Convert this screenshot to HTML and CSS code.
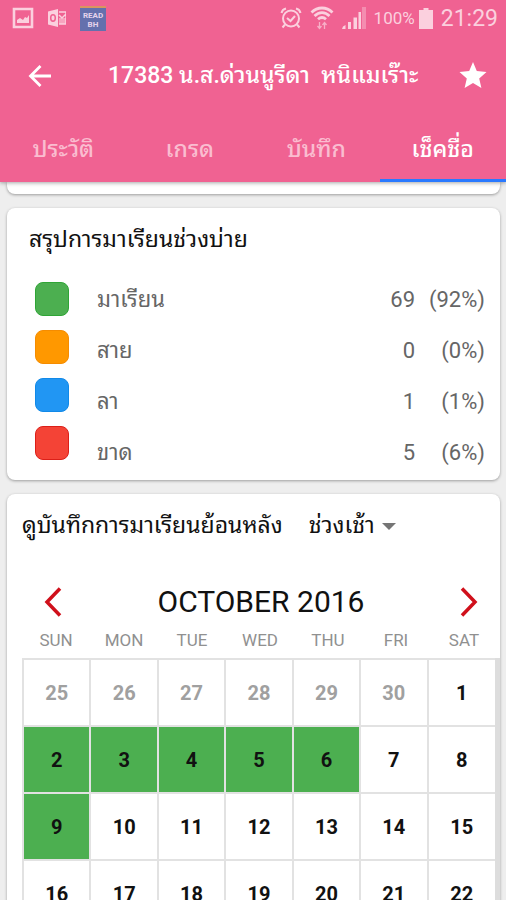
FILE: index.html
```html
<!DOCTYPE html>
<html lang="th">
<head>
<meta charset="utf-8">
<meta name="viewport" content="width=device-width, initial-scale=1">
<title>เช็คชื่อ</title>
<link rel="stylesheet" href="styles.css">
</head>
<body>
<div class="app">
  <header class="header">
    <div class="status">
      <div class="status-group">
        <svg class="icon-image" viewBox="0 0 22 22" width="22" height="22"><path d="M2 2h18v18H2z" fill="none" stroke="currentColor" stroke-width="2.6"/><path d="M5 16v-3l3-2 3 2 2-3 2 1 2-3v8z" fill="currentColor"/></svg>
        <svg class="icon-mail" viewBox="0 0 18 18" width="18" height="18"><path d="M0 2.500 10 0v18L0 15.500z" fill="currentColor"/><path d="M11 3h7v12h-7M11 6l3 3 4-4" fill="none" stroke="currentColor" stroke-width="1.500"/><path d="M11 9h7v6h-7z" fill="currentColor" opacity=".6"/><ellipse cx="5" cy="9" rx="2.300" ry="3.200" fill="none" stroke="#f06292" stroke-width="1.500"/></svg>
        <span class="read-badge">READ<br>BH</span>
      </div>
      <div class="status-group status-right">
        <svg viewBox="0 0 22 22" width="22" height="22" fill="none" stroke="currentColor" stroke-width="2"><circle cx="11" cy="11.500" r="8"/><path d="m7 11 3.500 3 4.500-5M1.500 6C2 3.500 4 2 6 1.500M16 1.500c2 .5 4 2 4.500 4.500M5 17.500 2.500 20.500M17 17.500l2.500 3"/></svg>
        <svg class="icon-wifi" viewBox="0 0 24 24" width="24" height="24" fill="none" stroke="currentColor" stroke-width="2.800"><path d="M1.500 6.500c6-6 15-6 21 0M4.500 10c4.500-4.500 10.500-4.500 15 0M8 13.200c2.500-2.200 5.500-2.200 8 0"/><path d="M9.500 22v-6M7.500 20l2 2.500 2-2.500M14.500 23v-6M12.500 19l2-2.500 2 2.500" stroke-width="1.300" opacity=".7"/></svg>
        <svg class="icon-signal" viewBox="0 0 24 22" width="24" height="22" fill="currentColor"><path d="M1 19.500 3.500 18v4H0zM6 15h3v7H6zM11.500 10.500H15V22h-3.500zM16.500 5H19v17h-2.500z"/><path d="M20 0h4v22h-4z" opacity=".4"/></svg>
        <span class="percent">100%</span>
        <svg class="icon-battery" viewBox="0 0 14 21" width="14" height="21" fill="currentColor"><path d="M4.500 0h5v2H14v19H0V2h4.500z"/></svg>
        <time class="clock">21:29</time>
      </div>
    </div>
    <div class="toolbar">
      <button class="icon-button" aria-label="กลับ"><svg viewBox="0 0 24 24" width="24" height="24" fill="none" stroke="currentColor" stroke-width="2.800"><path d="M23 12H3M12.500 2 2.500 12l10 10"/></svg></button>
      <h1 class="title">17383 น.ส.ด่วนนูรีดา&nbsp; หนิแมเร๊าะ</h1>
      <button class="icon-button" aria-label="รายการโปรด"><svg viewBox="0 0 28 28" width="28" height="28" fill="currentColor"><path d="m14 0 3.800 9 9.700 1-7.300 6.500 2.200 9.500L14 21l-8.400 5 2.200-9.500L.5 10l9.700-1z"/></svg></button>
    </div>
    <nav class="tabs">
      <a class="tab" href="#history">ประวัติ</a>
      <a class="tab" href="#grades">เกรด</a>
      <a class="tab" href="#notes">บันทึก</a>
      <a class="tab tab-active" href="#attendance" aria-current="page">เช็คชื่อ</a>
    </nav>
  </header>

  <main class="content">
    <div class="card card-previous"></div>

    <section class="card summary">
      <h2 class="summary-title">สรุปการมาเรียนช่วงบ่าย</h2>
      <div class="summary-body">
        <div class="swatches">
          <span class="swatch present"></span>
          <span class="swatch late"></span>
          <span class="swatch leave"></span>
          <span class="swatch absent"></span>
        </div>
        <table class="counts">
          <tbody>
            <tr><th scope="row">มาเรียน</th><td>69</td><td class="share">(92%)</td></tr>
            <tr><th scope="row">สาย</th><td>0</td><td class="share">(0%)</td></tr>
            <tr><th scope="row">ลา</th><td>1</td><td class="share">(1%)</td></tr>
            <tr><th scope="row">ขาด</th><td>5</td><td class="share">(6%)</td></tr>
          </tbody>
        </table>
      </div>
    </section>

    <section class="card history">
      <div class="period">
        <label for="period">ดูบันทึกการมาเรียนย้อนหลัง</label>
        <span class="select-wrap">
          <select id="period"><option>ช่วงเช้า</option></select>
        </span>
      </div>
      <div class="month">
        <button class="month-button" aria-label="เดือนก่อน"><svg viewBox="0 0 18 30" width="18" height="30" fill="none" stroke="currentColor" stroke-width="3.500"><path d="M16 1.500 3 15l13 13.500"/></svg></button>
        <h2 class="month-title">OCTOBER 2016</h2>
        <button class="month-button" aria-label="เดือนถัดไป"><svg viewBox="0 0 18 30" width="18" height="30" fill="none" stroke="currentColor" stroke-width="3.500"><path d="m2 1.500 13 13.500L2 28.500"/></svg></button>
      </div>
      <div class="weekdays">
        <span>SUN</span><span>MON</span><span>TUE</span><span>WED</span><span>THU</span><span>FRI</span><span>SAT</span>
      </div>
      <div class="calendar-frame">
        <table class="calendar">
          <tbody>
            <tr><td class="other">25</td><td class="other">26</td><td class="other">27</td><td class="other">28</td><td class="other">29</td><td class="other">30</td><td>1</td></tr>
            <tr><td class="present">2</td><td class="present">3</td><td class="present">4</td><td class="present">5</td><td class="present">6</td><td>7</td><td>8</td></tr>
            <tr><td class="present">9</td><td>10</td><td>11</td><td>12</td><td>13</td><td>14</td><td>15</td></tr>
            <tr><td>16</td><td>17</td><td>18</td><td>19</td><td>20</td><td>21</td><td>22</td></tr>
          </tbody>
        </table>
      </div>
    </section>
  </main>
</div>
</body>
</html>
```
FILE: styles.css
```css
* { box-sizing: border-box; }

body {
  margin: 0;
  background: #eee;
  color: #111;
  font-family: Roboto, "Noto Sans Thai Looped", "Noto Looped Thai", Waree, Loma, Garuda, Umpush, "Droid Sans Thai", "Noto Sans Thai", "Noto Sans", sans-serif;
}

h1, h2 { margin: 0; font-weight: 400; }

button {
  padding: 0;
  border: 0;
  background: none;
  color: inherit;
  display: flex;
}

svg { display: block; flex: none; }

.app {
  height: 100vh;
  overflow: hidden;
}

/* Header */
.header {
  position: relative;
  background: #f06292;
  color: #fff;
  box-shadow: 0 1px 4px rgba(0, 0, 0, .35);
}

.status {
  display: flex;
  justify-content: space-between;
  align-items: center;
  height: 36px;
  padding: 0 8px 0 12px;
  color: #fbd0de;
}

.status-group {
  display: flex;
  align-items: center;
  gap: 14px;
}

.status-right { gap: 8px; }

.read-badge {
  width: 26px;
  height: 25px;
  padding-top: 3px;
  border-top: 2px solid #d9955f;
  background: #6470ad;
  color: #e5d3ec;
  font-size: 8px;
  font-weight: 700;
  line-height: 9px;
  text-align: center;
}

.percent { font-size: 17px; }
.icon-battery { margin-left: -4px; }
.clock { font-size: 23px; }

.toolbar {
  display: flex;
  align-items: center;
  gap: 56px;
  height: 80px;
  padding: 0 19px 0 28px;
}

.toolbar .icon-button:last-child { margin-left: auto; }

.title {
  margin-right: -56px;
  font-size: 23px;
  font-weight: 500;
  line-height: 32px;
  white-space: nowrap;
}

.tabs {
  display: grid;
  grid-template-columns: repeat(4, 1fr);
}

.tab {
  height: 66px;
  border-bottom: 3px solid transparent;
  color: #fabdd0;
  font-size: 23px;
  font-weight: 500;
  line-height: 68px;
  text-align: center;
  text-decoration: none;
}

.tab-active {
  border-color: #2979ff;
  color: #fff;
}

/* Cards */
.content {
  display: flex;
  flex-direction: column;
  gap: 14px;
  padding: 0 6px 0 7px;
}

.card {
  border-radius: 8px;
  background: #fff;
  box-shadow: 0 1px 3px rgba(0, 0, 0, .35);
}

.card-previous {
  height: 12px;
  border-radius: 0 0 8px 8px;
}

.summary { padding: 16px 15px 2px 22px; }

.summary-title {
  font-size: 23px;
  line-height: 32px;
}

.summary-body {
  display: flex;
  gap: 28px;
  padding: 18px 0 0 6px;
}

.swatches {
  display: flex;
  flex-direction: column;
  gap: 14px;
  padding-top: 8px;
}

.swatch {
  width: 34px;
  height: 34px;
  border: 1px solid;
  border-radius: 8px;
}

.swatch.present { background: #4caf50; border-color: #2fa536; }
.swatch.late { background: #ff9800; border-color: #f58c00; }
.swatch.leave { background: #2196f3; border-color: #1189e8; }
.swatch.absent { background: #f44336; border-color: #dc1f18; }

.counts {
  flex: 1;
  border-collapse: collapse;
  color: #666;
  font-size: 22px;
  line-height: 32px;
}

.counts th, .counts td {
  height: 51px;
  padding: 0;
  font-weight: 400;
  text-align: right;
}

.counts th { text-align: left; }
.counts .share { width: 70px; }

/* Attendance calendar */
.period {
  display: flex;
  align-items: center;
  gap: 26px;
  padding: 15px 15px 0;
  font-size: 23px;
  line-height: 34px;
  white-space: nowrap;
}

.select-wrap {
  display: flex;
  align-items: center;
  gap: 7px;
}

.select-wrap::after {
  content: "";
  border: 7px solid transparent;
  border-top-color: #757575;
  border-bottom: 0;
}

select {
  appearance: none;
  padding: 0;
  border: 0;
  background: none;
  color: inherit;
  font: inherit;
}

.month {
  display: flex;
  align-items: center;
  justify-content: space-between;
  height: 42px;
  margin-top: 38px;
  padding: 0 22px 0 37px;
}

.month-title {
  font-size: 30px;
  line-height: 42px;
}

.month-button { color: #d0101b; }

.weekdays {
  display: grid;
  grid-template-columns: repeat(7, 1fr);
  padding: 0 2px 0 15px;
  color: #909090;
  font-size: 17px;
  line-height: 35px;
  text-align: center;
}

.calendar-frame {
  margin-left: 15px;
  border-right: 5px solid #ddd;
}

.calendar {
  width: 100%;
  table-layout: fixed;
  border-collapse: collapse;
  font-size: 20px;
  font-weight: 700;
}

.calendar td {
  height: 67px;
  padding: 0;
  border: 2px solid #e2e2e2;
  text-align: center;
}

.calendar td:last-child { border-right: 0; }
.calendar .other { color: #a0a0a0; }
.calendar .present { background: #4caf50; }
```
